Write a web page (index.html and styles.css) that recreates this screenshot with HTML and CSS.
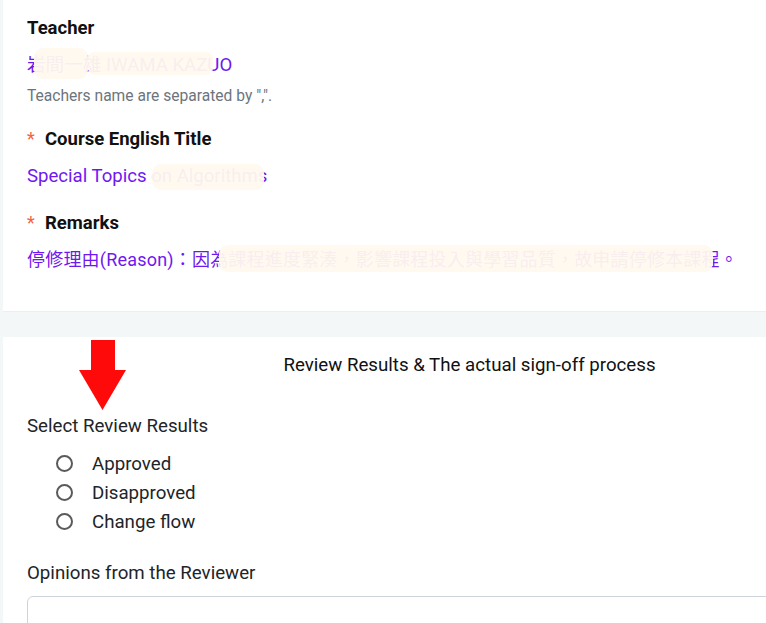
FILE: index.html
```html
<!DOCTYPE html>
<html lang="zh-Hant">
<head>
<meta charset="utf-8">
<title>Course Withdrawal Review</title>
<link rel="stylesheet" href="styles.css">
</head>
<body>
<div class="page">
  <section class="card info-card">
    <div class="field">
      <div class="field-label">Teacher</div>
      <div class="field-value">岩間一雄 IWAMA KAZUO<span class="mask mask-t1"></span><span class="mask mask-t2"></span></div>
      <div class="field-hint">Teachers name are separated by ",".</div>
    </div>
    <div class="field">
      <div class="field-label"><span class="req">*</span>Course English Title</div>
      <div class="field-value">Special Topics on Algorithms<span class="mask mask-title"></span></div>
    </div>
    <div class="field">
      <div class="field-label"><span class="req">*</span>Remarks</div>
      <div class="field-value remark-value">停修理由(Reason)：因為課程進度緊湊，影響課程投入與學習品質，故申請停修本課程。<span class="mask mask-remark"></span></div>
    </div>
  </section>

  <section class="card review-card">
    <svg class="pointer" width="52" height="72" viewBox="0 0 52 72" aria-hidden="true">
      <polygon points="15,0 39,0 39,30 50,30 26.5,70 3,30 15,30" fill="#ff0a0a"/>
    </svg>
    <h2 class="review-title">Review Results &amp; The actual sign-off process</h2>
    <div class="group-label">Select Review Results</div>
    <div class="radio-list">
      <label class="radio-row"><span class="radio"></span>Approved</label>
      <label class="radio-row"><span class="radio"></span>Disapproved</label>
      <label class="radio-row"><span class="radio"></span>Change flow</label>
    </div>
    <div class="group-label opinions-label">Opinions from the Reviewer</div>
    <div class="opinion-box"></div>
  </section>
</div>
</body>
</html>
```

FILE: styles.css
```css
html, body {
  margin: 0;
  padding: 0;
  overflow: hidden;
  background: #f4f7f8;
}

body {
  font-family: Roboto, "Noto Sans CJK TC", sans-serif;
  color: #212529;
}

.page {
  display: flex;
  flex-direction: column;
  gap: 25px;
  padding-left: 3px;
  width: 933px;
}

.card {
  background: #ffffff;
  padding: 0 24px;
}

/* Course information card */
.info-card {
  padding-top: 16px;
  padding-bottom: 37px;
  border-bottom: 1px solid #eceeef;
  display: flex;
  flex-direction: column;
  gap: 21px;
}

.field-label {
  font-size: 18.5px;
  font-weight: 700;
  line-height: 24px;
  color: #111111;
  display: flex;
  align-items: center;
}

.req {
  color: #f2633f;
  font-weight: 400;
  width: 18px;
  font-size: 18px;
}

.field-value {
  position: relative;
  margin-top: 11px;
  font-size: 18.6px;
  line-height: 28px;
  color: #7018f0;
  white-space: nowrap;
}

.remark-value {
  font-size: 18px;
  letter-spacing: 0.2px;
}

.field-hint {
  margin-top: 7px;
  font-size: 15.6px;
  line-height: 20px;
  color: #6c757d;
}

/* privacy masks laid over parts of the values */
.mask {
  position: absolute;
  background: rgba(255, 249, 238, 0.95);
  border-radius: 9px;
}

.mask-t1 { left: 7px; top: -3px; width: 54px; height: 31px; }
.mask-t2 { left: 61px; top: 1px; width: 125px; height: 23px; border-radius: 7px; }
.mask-title { left: 125px; top: 2px; width: 112px; height: 26px; }
.mask-remark { left: 192px; top: -1px; width: 494px; height: 27px; }

/* Review card */
.review-card {
  position: relative;
  padding-top: 14px;
  min-height: 300px;
}

.pointer {
  position: absolute;
  left: 73px;
  top: 3px;
}

.review-title {
  margin: 0;
  text-align: center;
  font-size: 18.7px;
  font-weight: 400;
  line-height: 28px;
  color: #111111;
}

.group-label {
  margin-top: 34px;
  font-size: 18.7px;
  line-height: 26px;
  color: #212529;
}

.radio-list {
  margin-top: 10px;
  display: flex;
  flex-direction: column;
  padding-left: 29px;
}

.radio-row {
  display: flex;
  align-items: center;
  height: 29px;
  font-size: 18.7px;
  color: #212529;
}

.radio {
  box-sizing: border-box;
  width: 17px;
  height: 17px;
  border: 2px solid #5a5a5a;
  border-radius: 50%;
  margin-right: 19px;
}

.opinions-label {
  margin-top: 24px;
}

.opinion-box {
  margin-top: 10px;
  height: 80px;
  border: 1px solid #ced4da;
  border-radius: 6px;
}
```
